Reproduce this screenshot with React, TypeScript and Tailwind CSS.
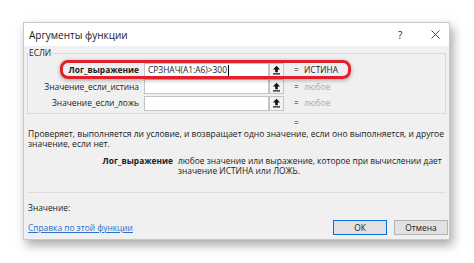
import React from "react";

const font = { fontFamily: '"Open Sans", "Noto Sans", sans-serif' };

function UpBtn() {
  return (
    <div className="flex h-[15px] w-[15px] items-center justify-center border border-[#c4c4c4] bg-[#f3f3f3]">
      <svg width="9" height="10" viewBox="0 0 9 10">
        <path d="M4.5 0.8 L8 4.5 H5.8 V7.2 H3.2 V4.5 H1 Z" fill="#111" />
        <rect x="1" y="8.3" width="7" height="1.2" fill="#111" />
      </svg>
    </div>
  );
}

function Row({
  label,
  bold,
  value,
  valueGray,
  text,
}: {
  label: string;
  bold?: boolean;
  value: string;
  valueGray?: boolean;
  text?: string;
}) {
  return (
    <div className="flex h-[16.6px] items-center">
      <div className={`w-[107px] pr-[5px] text-right ${bold ? "font-bold" : ""}`}>{label}</div>
      <div className="flex h-[15px] w-[125px] items-center border border-[#c4c4c4] bg-white pl-[3px]">
        {text}
        {text ? <span className="ml-px inline-block h-[11px] w-px bg-black" /> : null}
      </div>
      <UpBtn />
      <div className="ml-[10px] w-[10px]">=</div>
      <div className={valueGray ? "text-[#a8a8a8]" : ""}>{value}</div>
    </div>
  );
}

export default function App() {
  return (
    <div
      className="relative h-[263px] w-[474px] bg-white text-[8.4px] leading-[12px] text-[#202020]"
      style={font}
    >
      <div className="ml-[23px] pt-[22px]">
        <div className="flex h-[218px] w-[427px] flex-col border border-[#c8c8c8] bg-[#f0f0f0] shadow-[3px_5px_10px_rgba(0,0,0,0.35)]">
          <div className="flex h-[23px] shrink-0 items-center bg-white pl-[5px] text-[10px]">
            <div className="flex-1">Аргументы функции</div>
            <div className="w-[10px] text-[10px]">?</div>
            <div className="ml-[22px] mr-[9px] flex h-[10px] w-[10px] items-center justify-center">
              <svg width="9" height="9" viewBox="0 0 9 9">
                <path d="M0.5 0.5 L8.5 8.5 M8.5 0.5 L0.5 8.5" stroke="#333" strokeWidth="0.9" />
              </svg>
            </div>
          </div>
          <div className="flex flex-1 flex-col px-[3px] pb-[4px] pt-px">
            <fieldset className="m-0 h-[67px] shrink-0 border border-[#d8d8d8] px-[0px] pt-[4px] pb-0">
              <legend className="ml-0 px-px leading-[12px]">ЕСЛИ</legend>
              <div className="-mt-[1px] pl-[9px]">
                <Row label="Лог_выражение" bold value="ИСТИНА" text="СРЗНАЧ(A1:A6)>300" />
                <Row label="Значение_если_истина" value="любое" valueGray />
                <Row label="Значение_если_ложь" value="любое" valueGray />
              </div>
            </fieldset>
            <div className="mt-[3px] pl-[267px]">=</div>
            <div className="whitespace-nowrap pl-px text-[8.5px] leading-[9.5px]">
              Проверяет, выполняется ли условие, и возвращает одно значение, если оно выполняется, и другое
              <br />
              значение, если нет.
            </div>
            <div className="mt-[8px] flex leading-[10px]">
              <div className="w-[151px] pr-[5px] text-right font-bold">Лог_выражение</div>
              <div>
                любое значение или выражение, которое при вычислении дает
                <br />
                значение ИСТИНА или ЛОЖЬ.
              </div>
            </div>
            <div className="mt-[16px] h-px bg-[#dcdcdc]" />
            <div className="mt-[9px] pl-px">Значение:</div>
            <div className="-mr-[2px] mt-[6px] flex h-[15px] items-center">
              <div className="flex-1 pl-px text-[#2a6fc9] underline">Справка по этой функции</div>
              <div className="flex h-[15px] w-[54px] items-center justify-center border-[1.5px] border-[#0a6fd6] bg-[#e1e1e1]">
                ОК
              </div>
              <div className="ml-[7px] flex h-[15px] w-[54px] items-center justify-center border border-[#b4b4b4] bg-[#e1e1e1]">
                Отмена
              </div>
            </div>
          </div>
        </div>
      </div>
      <div className="absolute left-[60px] top-[60px] h-[19px] w-[291px] rounded-[8px] border-[3px] border-[#e0202a] shadow-[0_1px_4px_rgba(0,0,0,0.35)]" />
    </div>
  );
}
